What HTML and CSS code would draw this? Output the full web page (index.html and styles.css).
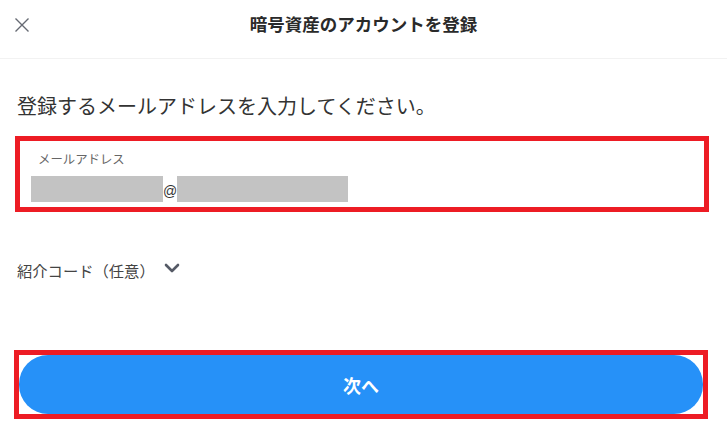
FILE: index.html
```html
<!DOCTYPE html>
<html lang="ja">
<head>
<meta charset="utf-8">
<link rel="stylesheet" href="styles.css">
</head>
<body>
<div class="page">
  <header class="header">
    <span class="close">
      <svg width="16" height="16" viewBox="0 0 16 16"><path d="M1.5 1.5 L14.5 14.5 M14.5 1.5 L1.5 14.5" stroke="#666a73" stroke-width="1.4" fill="none"/></svg>
    </span>
    <h1 class="title">暗号資産のアカウントを登録</h1>
  </header>
  <p class="lead">登録するメールアドレスを入力してください。</p>
  <div class="mark mark-input">
    <div class="field">
      <div class="label">メールアドレス</div>
      <div class="value"><span class="blur b1"></span><span class="at">@</span><span class="blur b2"></span></div>
    </div>
  </div>
  <div class="referral">
    <span>紹介コード（任意）</span>
    <svg class="chev" width="16" height="10" viewBox="0 0 16 10"><path d="M2 2 L8 8 L14 2" stroke="#555a66" stroke-width="2.6" fill="none" stroke-linecap="round" stroke-linejoin="round"/></svg>
  </div>
  <div class="mark mark-btn">
    <button class="next">次へ</button>
  </div>
</div>
</body>
</html>
```
FILE: styles.css
```css
* { box-sizing: border-box; }
html, body { margin: 0; padding: 0; background: #fff; }
body { font-family: "Noto Sans CJK JP", "Noto Sans", sans-serif; color: #333; }
.page { width: 727px; height: 431px; overflow: hidden; display: flex; flex-direction: column; }
.header { height: 59px; display: flex; align-items: center; justify-content: center; position: relative; border-bottom: 1px solid #f2f2f2; }
.close { position: absolute; left: 14px; top: 17px; width: 16px; height: 16px; display: block; }
.close svg { display: block; }
.title { margin: 0; font-size: 17.5px; font-weight: 700; color: #2a2a2a; line-height: 20px; margin-top: -10px; }
.lead { margin: 34px 0 0 17px; font-size: 20px; line-height: 26px; color: #333; font-weight: 400; }
.mark { border: 5px solid #ed1c24; }
.mark-input { margin: 17px 18px 0 15px; height: 76px; }
.field { padding: 10px 0 0 11px; }
.label { font-size: 12.4px; line-height: 16px; color: #666; margin-left: 7px; }
.value { display: flex; align-items: flex-end; margin-top: 9px; height: 26px; }
.blur { background: #c3c3c3; height: 26px; display: block; }
.b1 { width: 132px; }
.b2 { width: 171px; }
.at { font-family: "Liberation Sans", sans-serif; font-size: 14px; color: #333; width: 14px; line-height: 18px; margin-bottom: 2px; }
.referral { display: flex; align-items: center; margin: 48px 0 0 17px; height: 20px; font-size: 15.3px; color: #444; }
.chev { margin-left: 9px; margin-top: -4px; }
.mark-btn { margin: 70px 19px 0 14px; height: 69px; }
.next { display: block; width: 100%; height: 100%; border: 0; border-radius: 29px; background: #2691f8; color: #fff; font-family: "Noto Sans CJK JP", sans-serif; font-size: 18px; font-weight: 700; padding: 0; }
```
